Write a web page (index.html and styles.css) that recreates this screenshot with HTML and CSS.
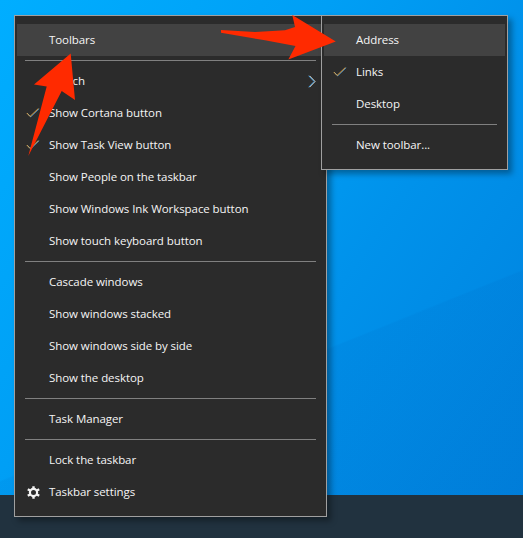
FILE: index.html
```html
<!DOCTYPE html>
<html lang="en">
<head>
<meta charset="utf-8">
<title>Taskbar context menu</title>
<link rel="stylesheet" href="styles.css">
</head>
<body>
<div class="desktop">
  <div class="wallpaper"></div>
  <div class="taskbar"></div>

  <div class="menu menu-main">
    <div class="item active"><span class="slot"></span><span class="label">Toolbars</span></div>
    <div class="sep"></div>
    <div class="item"><span class="slot"></span><span class="label">Search</span>
      <svg class="chevron" width="8" height="13" viewBox="0 0 8 13"><path d="M1.500 .8 7 6.500 1.500 12.200" fill="none" stroke="#f1e6d0" stroke-width="1"/><path d="M.7 .8 6.200 6.500 .7 12.200" fill="none" stroke="#4fa6e8" stroke-width="1"/></svg>
    </div>
    <div class="item"><span class="slot"><svg class="check" width="14" height="10" viewBox="0 0 14 10"><path d="M1.500 5.400 4.700 8.900 13.200 .7" fill="none" stroke="#4fa6e8" stroke-width=".8"/><path d="M.8 5 4 8.500 12.400 .5" fill="none" stroke="#f2ad45" stroke-width=".9"/></svg></span><span class="label">Show Cortana button</span></div>
    <div class="item"><span class="slot"><svg class="check" width="14" height="10" viewBox="0 0 14 10"><path d="M1.500 5.400 4.700 8.900 13.200 .7" fill="none" stroke="#4fa6e8" stroke-width=".8"/><path d="M.8 5 4 8.500 12.400 .5" fill="none" stroke="#f2ad45" stroke-width=".9"/></svg></span><span class="label">Show Task View button</span></div>
    <div class="item"><span class="slot"></span><span class="label">Show People on the taskbar</span></div>
    <div class="item"><span class="slot"></span><span class="label">Show Windows Ink Workspace button</span></div>
    <div class="item"><span class="slot"></span><span class="label">Show touch keyboard button</span></div>
    <div class="sep"></div>
    <div class="item"><span class="slot"></span><span class="label">Cascade windows</span></div>
    <div class="item"><span class="slot"></span><span class="label">Show windows stacked</span></div>
    <div class="item"><span class="slot"></span><span class="label">Show windows side by side</span></div>
    <div class="item"><span class="slot"></span><span class="label">Show the desktop</span></div>
    <div class="sep"></div>
    <div class="item"><span class="slot"></span><span class="label">Task Manager</span></div>
    <div class="sep"></div>
    <div class="item"><span class="slot"></span><span class="label">Lock the taskbar</span></div>
    <div class="item"><span class="slot"><svg width="13" height="13" viewBox="0 0 13 13"><circle cx="6.500" cy="6.500" r="3.600" fill="none" stroke="#f4f4f4" stroke-width="2.200"/><path d="M6.500 .3V3M6.500 10V12.700M.8 3.200 3.100 4.550M9.900 8.450 12.200 9.800M.8 9.800 3.100 8.450M9.900 4.550 12.200 3.200" stroke="#f4f4f4" stroke-width="2.400" fill="none"/></svg></span><span class="label">Taskbar settings</span></div>
  </div>

  <div class="menu menu-sub">
    <div class="item active"><span class="slot"></span><span class="label">Address</span></div>
    <div class="item"><span class="slot"><svg class="check" width="14" height="10" viewBox="0 0 14 10"><path d="M1.500 5.400 4.700 8.900 13.200 .7" fill="none" stroke="#4fa6e8" stroke-width=".8"/><path d="M.8 5 4 8.500 12.400 .5" fill="none" stroke="#f2ad45" stroke-width=".9"/></svg></span><span class="label">Links</span></div>
    <div class="item"><span class="slot"></span><span class="label">Desktop</span></div>
    <div class="sep"></div>
    <div class="item"><span class="slot"></span><span class="label">New toolbar...</span></div>
  </div>

  <svg class="arrows" width="523" height="538" viewBox="0 0 523 538">
    <path d="M221 30 255 32 285 30.200 295 27 292.300 15 335.800 41.500 288.300 59.500 295.500 46 265 40.300 221 32.800Z" fill="#ff2a00"/>
    <path d="M70.700 53.500 34 84.500 46.700 86.500 28.300 156 61.700 91 75 100Z" fill="#ff2a00"/>
  </svg>
</div>
</body>
</html>
```

FILE: styles.css
```css
* { box-sizing: border-box; }
html, body { margin: 0; padding: 0; }
body { background: #0090ea; }
.desktop {
  position: relative;
  width: 523px;
  height: 538px;
  overflow: hidden;
  display: flex;
  flex-direction: column;
  font-family: "Open Sans", "Noto Sans", sans-serif;
  font-size: 11.5px;
  letter-spacing: -0.07px;
  color: #f5f5f5;
}
.wallpaper {
  flex: 1;
  background:
    linear-gradient(158deg, rgba(0,0,0,0) 68%, rgba(0,60,150,.06) 68.3%),
    linear-gradient(125deg, #00aeff 0%, #009ff5 38%, #0092eb 62%, #0081dd 100%);
}
.taskbar { height: 43px; background: #21323f; }
.menu {
  position: absolute;
  top: 15px;
  padding: 8px 0;
  background: #2b2b2b;
  border: 1px solid #a0a0a0;
  box-shadow: 4px 4px 6px rgba(0, 0, 0, .35);
}
.menu-main { left: 14px; width: 313px; }
.menu-sub { left: 321px; width: 187px; }
.item {
  display: flex;
  align-items: center;
  height: 32px;
  margin: 0 2px;
  white-space: nowrap;
}
.item.active { background: #424242; }
.label { padding-bottom: 2px; }
.slot {
  flex: none;
  width: 32px;
  display: flex;
  justify-content: center;
  align-items: center;
}
.check { display: block; }
.chevron { margin-left: auto; margin-right: 8px; }
.sep {
  height: 1px;
  margin: 4px 10px;
  background: #808080;
}
.arrows { position: absolute; left: 0; top: 0; }
```
